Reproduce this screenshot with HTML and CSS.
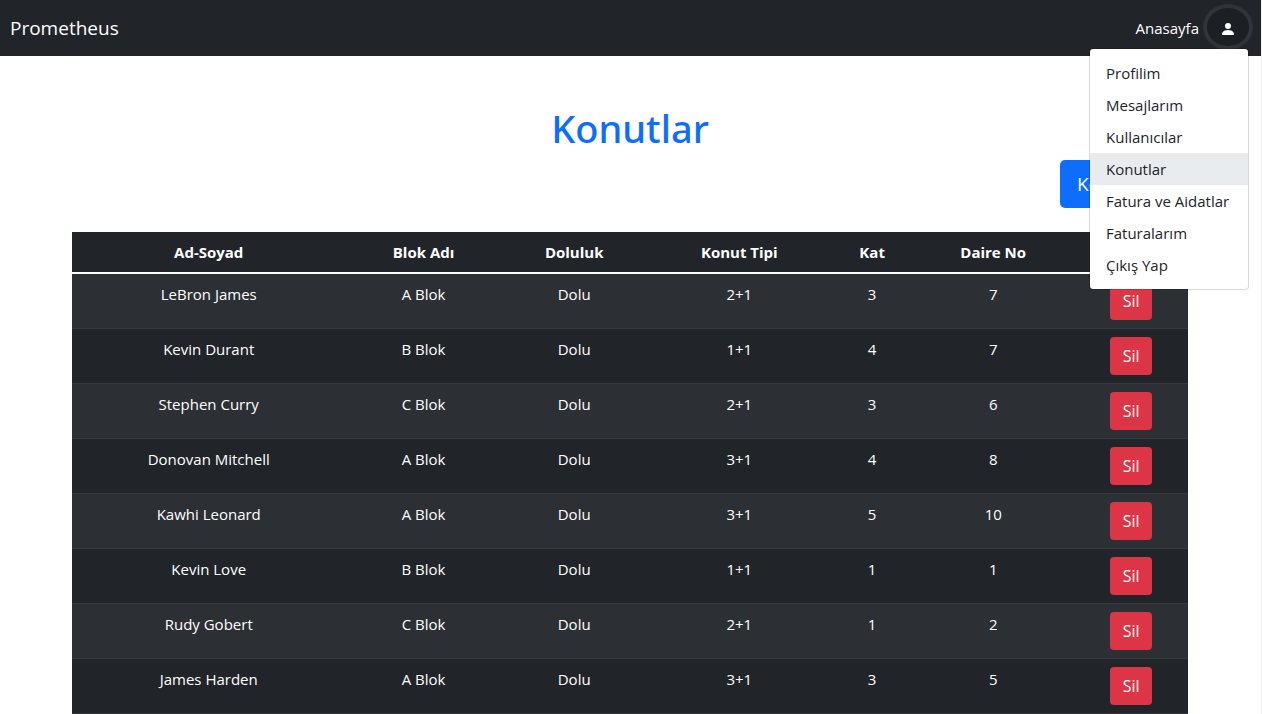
FILE: index.html
```html
<!DOCTYPE html>
<html lang="tr">
<head>
<meta charset="utf-8">
<meta name="viewport" content="width=device-width, initial-scale=1">
<title>Prometheus</title>
<link rel="stylesheet" href="styles.css">
</head>
<body>
<header class="navbar">
  <a class="brand" href="#">Prometheus</a>
  <nav class="nav-right">
    <a class="nav-link" href="#">Anasayfa</a>
    <div class="dropdown">
      <button class="user-button" type="button" aria-label="Kullanıcı menüsü" aria-expanded="true">
        <svg width="16" height="16" viewBox="0 0 16 16" fill="currentColor" aria-hidden="true"><path d="M3 14s-1 0-1-1 1-4 6-4 6 3 6 4-1 1-1 1H3zm5-6a3 3 0 1 0 0-6 3 3 0 0 0 0 6z"/></svg>
      </button>
      <div class="menu">
        <a class="menu-item" href="#">Profilim</a>
        <a class="menu-item" href="#">Mesajlarım</a>
        <a class="menu-item" href="#">Kullanıcılar</a>
        <a class="menu-item hovered" href="#">Konutlar</a>
        <a class="menu-item" href="#">Fatura ve Aidatlar</a>
        <a class="menu-item" href="#">Faturalarım</a>
        <a class="menu-item" href="#">Çıkış Yap</a>
      </div>
    </div>
  </nav>
</header>
<main class="container">
  <h1 class="title">Konutlar</h1>
  <div class="toolbar"><button class="add-button" type="button">Konut Ekle</button></div>
  <table class="table">
    <colgroup><col class="c-name"><col class="c-block"><col class="c-state"><col class="c-type"><col class="c-floor"><col class="c-number"><col class="c-action"></colgroup>
    <thead>
      <tr><th>Ad-Soyad</th><th>Blok Adı</th><th>Doluluk</th><th>Konut Tipi</th><th>Kat</th><th>Daire No</th><th></th></tr>
    </thead>
    <tbody>
      <tr><td>LeBron James</td><td>A Blok</td><td>Dolu</td><td>2+1</td><td>3</td><td>7</td><td><button class="delete" type="button">Sil</button></td></tr>
      <tr><td>Kevin Durant</td><td>B Blok</td><td>Dolu</td><td>1+1</td><td>4</td><td>7</td><td><button class="delete" type="button">Sil</button></td></tr>
      <tr><td>Stephen Curry</td><td>C Blok</td><td>Dolu</td><td>2+1</td><td>3</td><td>6</td><td><button class="delete" type="button">Sil</button></td></tr>
      <tr><td>Donovan Mitchell</td><td>A Blok</td><td>Dolu</td><td>3+1</td><td>4</td><td>8</td><td><button class="delete" type="button">Sil</button></td></tr>
      <tr><td>Kawhi Leonard</td><td>A Blok</td><td>Dolu</td><td>3+1</td><td>5</td><td>10</td><td><button class="delete" type="button">Sil</button></td></tr>
      <tr><td>Kevin Love</td><td>B Blok</td><td>Dolu</td><td>1+1</td><td>1</td><td>1</td><td><button class="delete" type="button">Sil</button></td></tr>
      <tr><td>Rudy Gobert</td><td>C Blok</td><td>Dolu</td><td>2+1</td><td>1</td><td>2</td><td><button class="delete" type="button">Sil</button></td></tr>
      <tr><td>James Harden</td><td>A Blok</td><td>Dolu</td><td>3+1</td><td>3</td><td>5</td><td><button class="delete" type="button">Sil</button></td></tr>
    </tbody>
  </table>
</main>
</body>
</html>
```
FILE: styles.css
```css
* { box-sizing: border-box; }

body {
  margin: 0;
  border-right: 1px solid #eeeeee;
  background: #fff;
  color: #212529;
  font-family: "Segoe UI", "Open Sans", "Noto Sans", sans-serif;
  font-size: 15px;
  line-height: 24px;
}

a { text-decoration: none; }
button { font-family: inherit; cursor: pointer; }

.navbar {
  display: flex;
  justify-content: space-between;
  align-items: flex-start;
  padding: 8px 12px 8px 10px;
  background: #212529;
}
.brand { color: #fff; font-size: 19px; line-height: 40px; }
.nav-right { display: flex; align-items: flex-start; gap: 8px; }
.nav-link { color: #fff; line-height: 40px; }
.dropdown { position: relative; }
.user-button {
  display: flex;
  justify-content: center;
  align-items: center;
  width: 42px;
  height: 38px;
  padding: 4px 0 0;
  border: 0;
  border-radius: 50%;
  background: #1c1f23;
  box-shadow: 0 0 0 4px #303438;
  color: #fff;
}
.menu {
  position: absolute;
  z-index: 10;
  top: 40px;
  right: 0;
  width: 160px;
  padding: 8px 0;
  border: 1px solid rgba(0, 0, 0, .15);
  border-radius: 4px;
  background: #fff;
  background-clip: padding-box;
}
.menu-item {
  display: block;
  padding: 4px 16px;
  color: #212529;
  white-space: nowrap;
}
.hovered { background: #e9ecef; }

.container { padding: 0 73px 0 72px; }
.title {
  margin: 48px 0 8px;
  color: #0d6efd;
  font-family: "Segoe UI", "Noto Sans", "Open Sans", sans-serif;
  font-size: 38px;
  font-weight: 500;
  line-height: 48px;
  text-align: center;
}
.toolbar { display: flex; justify-content: flex-end; margin-bottom: 24px; }
.add-button {
  height: 48px;
  min-width: 128px;
  padding: 0 16px;
  border: 0;
  border-radius: 5px;
  background: #0d6efd;
  color: #fff;
  font-size: 19px;
}

.table {
  width: 100%;
  table-layout: fixed;
  border-spacing: 0;
  background: #212529;
  color: #fff;
  text-align: center;
}
.c-name { width: 24.5%; }
.c-block { width: 14%; }
.c-state { width: 13%; }
.c-type { width: 16.6%; }
.c-floor { width: 7.2%; }
.c-number { width: 14.5%; }
.c-action { width: 10.2%; }
.table th { padding: 8px; border-bottom: 2px solid #fff; font-weight: 700; }
.table td { padding: 8px; border-bottom: 1px solid #373b3e; vertical-align: top; }
.table tbody tr:nth-child(odd) { background: #2c3034; }
.delete {
  display: block;
  width: 42px;
  height: 38px;
  margin: 0 auto;
  padding: 0;
  border: 0;
  border-radius: 4px;
  background: #dc3545;
  color: #fff;
  font-size: 16px;
}
```
